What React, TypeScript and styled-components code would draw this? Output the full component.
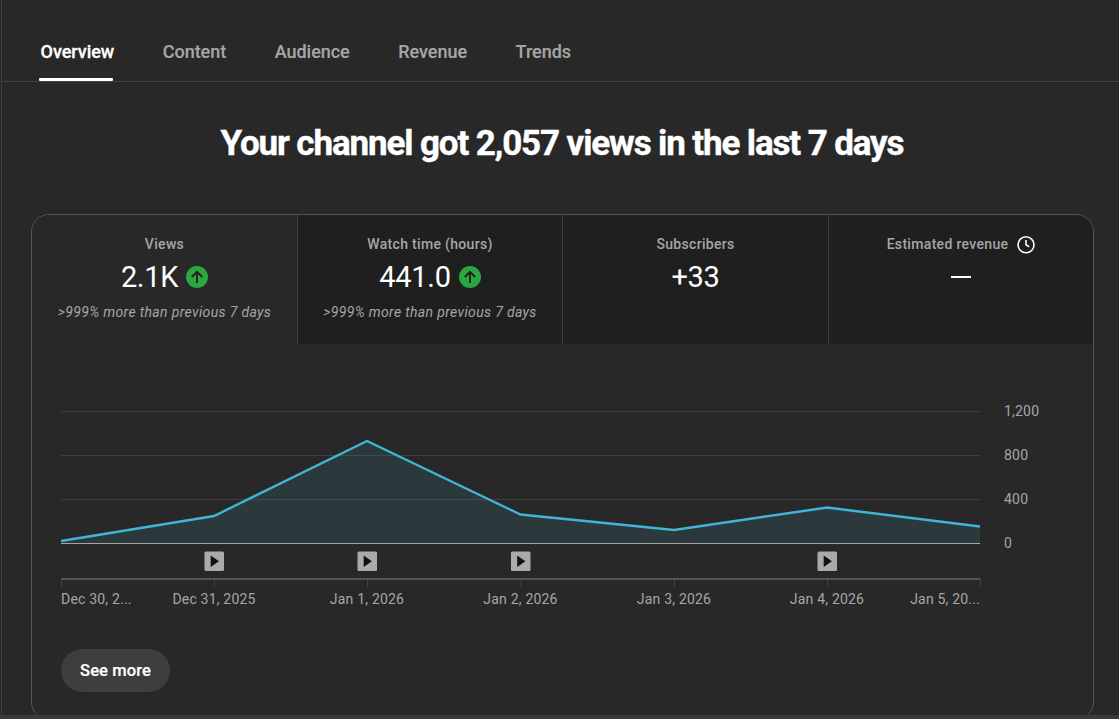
import styled, { createGlobalStyle } from "styled-components";

const GlobalStyle = createGlobalStyle`
  * {
    box-sizing: border-box;
  }

  body {
    margin: 0;
    background: #282828;
    color: #ffffff;
    font-family: Roboto, "Liberation Sans", sans-serif;
  }
`;

const Page = styled.div`
  display: flex;
  flex-direction: column;
  height: 719px;
  overflow: hidden;
`;

const Main = styled.main`
  flex: 1;
  min-height: 0;
  margin-left: 1px;
  border-left: 1px solid #3f3f3f;
  overflow: hidden;
`;

const BottomStrip = styled.div`
  flex: none;
  height: 4px;
  background: #3b393d;
`;

const Tabs = styled.nav`
  display: flex;
  gap: 48.6px;
  height: 82px;
  padding-left: 38.6px;
  border-bottom: 1px solid #424242;
`;

const Tab = styled.a<{ $active?: boolean }>`
  display: flex;
  flex-direction: column;
  justify-content: space-between;
  padding-top: 40px;
  font-size: 18px;
  font-weight: 500;
  line-height: 24px;
  letter-spacing: -0.04px;
  white-space: nowrap;
  color: ${({ $active }) => ($active ? "#ffffff" : "#a6a6a6")};
  -webkit-text-stroke: ${({ $active }) => ($active ? "0.3px" : "0.15px")};

  &::after {
    content: "";
    height: 3px;
    margin: 0 1px 0 -1.6px;
    border-radius: 1px;
    background: ${({ $active }) => ($active ? "#ffffff" : "transparent")};
  }
`;

const Title = styled.h1`
  margin: 38px 0 46px;
  padding-left: 3px;
  font-size: 35px;
  font-weight: 700;
  line-height: 48px;
  letter-spacing: -1.13px;
  -webkit-text-stroke: 0.4px;
  text-align: center;
  white-space: nowrap;
`;

const Card = styled.section`
  width: 1063px;
  height: 506px;
  margin-left: 29px;
  border: 1px solid #555555;
  border-radius: 18px;
  overflow: hidden;
`;

const Metrics = styled.div`
  display: grid;
  grid-template-columns: 265px 265px 266px 265px;
  height: 129px;
`;

const Metric = styled.div<{ $active?: boolean }>`
  display: flex;
  flex-direction: column;
  align-items: center;
  padding-top: 19px;
  background: ${({ $active }) => ($active ? "#282828" : "#1f1f1f")};

  & + & {
    border-left: 1px solid #3e3e3e;
  }
`;

const MetricLabel = styled.div`
  display: flex;
  align-items: center;
  gap: 9px;
  height: 20px;
  font-size: 14px;
  font-weight: 500;
  letter-spacing: 0.32px;
  color: #a6a6a6;
`;

const MetricValue = styled.div`
  display: flex;
  align-items: center;
  gap: 8px;
  height: 36px;
  margin-top: 5px;
  font-size: 29px;
  letter-spacing: -0.3px;
`;

const MetricNote = styled.div`
  margin-top: 7px;
  font-size: 14px;
  font-style: italic;
  line-height: 20px;
  letter-spacing: 0.35px;
  white-space: nowrap;
  color: #a6a6a6;
`;

const Dash = styled.span`
  width: 20px;
  height: 2px;
  background: #ffffff;
`;

const ChartArea = styled.div`
  padding: 56px 0 0 29px;
`;

const ChartSvg = styled.svg`
  display: block;
  font-size: 14px;
  letter-spacing: 0.2px;
  fill: #a6a6a6;
`;

const SeeMore = styled.button`
  display: block;
  width: 109px;
  height: 43px;
  margin: 34px 0 0 29px;
  padding: 0;
  border: 0;
  border-radius: 22px;
  background: #3e3e3e;
  color: #ffffff;
  font-family: inherit;
  font-size: 16.5px;
  font-weight: 500;
  letter-spacing: 0.1px;
  -webkit-text-stroke: 0.2px;
`;

const tabs = ["Overview", "Content", "Audience", "Revenue", "Trends"];

const metrics = [
  { label: "Views", value: "2.1K", up: true, note: ">999% more than previous 7 days" },
  { label: "Watch time (hours)", value: "441.0", up: true, note: ">999% more than previous 7 days" },
  { label: "Subscribers", value: "+33" },
  { label: "Estimated revenue", pending: true },
];

const gridLines = [
  { y: 11.5, label: "1,200" },
  { y: 55.5, label: "800" },
  { y: 99.5, label: "400" },
  { y: 143.5, label: "0" },
];

const days = [
  { x: 0, y: 141, label: "Dec 30, 2...", anchor: "start" as const },
  { x: 153, y: 116, label: "Dec 31, 2025", video: true },
  { x: 306, y: 41, label: "Jan 1, 2026", video: true },
  { x: 459.5, y: 114.5, label: "Jan 2, 2026", video: true },
  { x: 613, y: 130, label: "Jan 3, 2026" },
  { x: 766, y: 107.5, label: "Jan 4, 2026", video: true },
  { x: 919, y: 126.5, label: "Jan 5, 20...", anchor: "end" as const },
];

function UpIcon() {
  return (
    <svg width="22" height="22" viewBox="0 0 22 22">
      <circle cx="11" cy="11" r="11" fill="#2ba640" />
      <path d="M11 17V6M5.8 11L11 5.8L16.2 11" fill="none" stroke="#1f1f1f" strokeWidth="1.9" />
    </svg>
  );
}

function ClockIcon() {
  return (
    <svg width="18" height="19" viewBox="0 0 18 19" fill="none" stroke="#ffffff">
      <circle cx="9" cy="9.8" r="8" strokeWidth="1.6" />
      <path d="M9 5V9.8L12.2 11.7" strokeWidth="1.6" />
    </svg>
  );
}

function Chart() {
  const line = days.map((d) => `${d.x},${d.y}`).join(" ");

  return (
    <ChartSvg width="1000" height="215" viewBox="0 0 1000 215">
      {gridLines.map((g) => (
        <g key={g.label}>
          <line x1="0" x2="919" y1={g.y} y2={g.y} stroke="#3f3f3f" />
          <text x="943" y={g.y + 4.5}>{g.label}</text>
        </g>
      ))}
      <polygon points={`0,143 ${line} 919,143`} fill="#41b4d9" fillOpacity="0.12" />
      <line x1="0" x2="919" y1="143.5" y2="143.5" stroke="#a6a6a6" />
      <polyline points={line} fill="none" stroke="#41b4d9" strokeWidth="2.4" />
      <line x1="0" x2="919.5" y1="179" y2="179" stroke="#646464" strokeWidth="1.4" />
      {days.map((d) => (
        <g key={d.label}>
          <line x1={d.x + 0.5} x2={d.x + 0.5} y1="180" y2="187" stroke="#444444" />
          {d.video && (
            <>
              <rect x={d.x - 9.5} y="151.5" width="19.5" height="19.5" rx="1.5" fill="#aaaaaa" />
              <path d={`M${d.x - 3.3} 155.5L${d.x + 4.9} 161.2L${d.x - 3.3} 166.9Z`} fill="#111111" />
            </>
          )}
          <text x={d.x} y="204" textAnchor={d.anchor ?? "middle"}>{d.label}</text>
        </g>
      ))}
    </ChartSvg>
  );
}

export default function App() {
  return (
    <>
      <GlobalStyle />
      <Page>
        <Main>
          <Tabs>
            {tabs.map((tab) => (
              <Tab key={tab} $active={tab === "Overview"}>{tab}</Tab>
            ))}
          </Tabs>
          <Title>Your channel got 2,057 views in the last 7 days</Title>
          <Card>
            <Metrics>
              {metrics.map((m) => (
                <Metric key={m.label} $active={m.label === "Views"}>
                  <MetricLabel>
                    {m.label}
                    {m.pending && <ClockIcon />}
                  </MetricLabel>
                  <MetricValue>
                    {m.pending ? <Dash /> : m.value}
                    {m.up && <UpIcon />}
                  </MetricValue>
                  {m.note && <MetricNote>{m.note}</MetricNote>}
                </Metric>
              ))}
            </Metrics>
            <ChartArea>
              <Chart />
            </ChartArea>
            <SeeMore>See more</SeeMore>
          </Card>
        </Main>
        <BottomStrip />
      </Page>
    </>
  );
}
